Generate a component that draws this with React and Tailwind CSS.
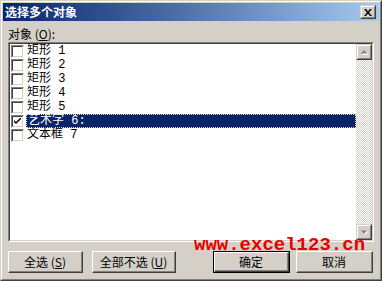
import React from "react";

const items = [
  { label: "矩形 1", checked: false },
  { label: "矩形 2", checked: false },
  { label: "矩形 3", checked: false },
  { label: "矩形 4", checked: false },
  { label: "矩形 5", checked: false },
  { label: "艺术字 6:", checked: true, selected: true },
  { label: "文本框 7", checked: false },
];

function CheckBox({ checked }) {
  return (
    <div className="w-[13px] h-[13px] border border-t-[#808080] border-l-[#808080] border-r-white border-b-white shrink-0">
      <div className="w-full h-full border border-t-[#404040] border-l-[#404040] border-r-[#d4d0c8] border-b-[#d4d0c8] bg-white flex items-center justify-center">
        {checked && (
          <svg width="7" height="7" viewBox="0 0 7 7">
            <path d="M0 2 L0 4 L2 6 L7 1 L7 -1 L2 4 Z" fill="#000" />
          </svg>
        )}
      </div>
    </div>
  );
}

function Raised({ className = "", children }) {
  return (
    <div className={"border border-t-[#d4d0c8] border-l-[#d4d0c8] border-r-[#404040] border-b-[#404040] " + className}>
      <div className="w-full h-full border border-t-white border-l-white border-r-[#808080] border-b-[#808080] bg-[#d4d0c8] flex items-center justify-center">
        {children}
      </div>
    </div>
  );
}

function Button({ className = "", def = false, children }) {
  if (def) {
    return (
      <div className={"border border-black " + className}>
        <div className="w-full h-full border border-t-white border-l-white border-r-[#404040] border-b-[#404040]">
          <div className="w-full h-full border-r border-b border-r-[#808080] border-b-[#808080] bg-[#d4d0c8] flex items-center justify-center text-[12px] text-black">
            {children}
          </div>
        </div>
      </div>
    );
  }
  return (
    <div className={"border border-t-white border-l-white border-r-[#404040] border-b-[#404040] " + className}>
      <div className="w-full h-full border-r border-b border-r-[#808080] border-b-[#808080] bg-[#d4d0c8] flex items-center justify-center text-[12px] text-black">
        {children}
      </div>
    </div>
  );
}

export default function App() {
  return (
    <div
      className="w-[382px] h-[281px] border border-t-[#d4d0c8] border-l-[#d4d0c8] border-r-[#404040] border-b-[#404040] overflow-hidden"
      style={{ fontFamily: '"Noto Sans CJK SC", "Noto Sans", sans-serif' }}
    >
      <div className="relative h-full border border-t-white border-l-white border-r-[#808080] border-b-[#808080] bg-[#d4d0c8] p-px flex flex-col">
        {/* title bar */}
        <div className="h-[18px] bg-gradient-to-r from-[#0a246a] to-[#a6caf0] flex items-center pl-[2px] pr-[3px]">
          <span className="text-white font-bold text-[12px] leading-[14px] flex-1">选择多个对象</span>
          <Raised className="w-[16px] h-[14px]">
            <svg width="8" height="7" viewBox="0 0 8 7">
              <path d="M0 0h2l2 2.5L6 0h2L5 3.5 8 7H6L4 4.5 2 7H0l3-3.5z" fill="#000" />
            </svg>
          </Raised>
        </div>

        {/* body */}
        <div className="flex-1 px-[5px] flex flex-col">
          <div className="mt-[6px] h-[14px] text-[12px] leading-[14px] text-black">
            对象 (<span className="underline">O</span>):
          </div>
          <div className="mt-px h-[200px] border border-t-[#808080] border-l-[#808080] border-r-white border-b-white">
            <div className="h-full border border-t-[#404040] border-l-[#404040] border-r-[#d4d0c8] border-b-[#d4d0c8] bg-white flex">
              <div className="flex-1 flex flex-col">
                {items.map((it) => (
                  <div key={it.label} className="h-[14px] flex items-center pl-px">
                    <CheckBox checked={it.checked} />
                    <div
                      className={
                        "ml-[2px] flex-1 h-[14px] flex items-center pl-px text-[12px] leading-[12px] " +
                        (it.selected
                          ? "bg-[#0a246a] text-white border border-dotted border-[#e8e0b0]"
                          : "text-black")
                      }
                      style={{ fontFamily: '"Liberation Mono", "Noto Sans CJK SC", monospace' }}
                    >
                      {it.label}
                    </div>
                  </div>
                ))}
              </div>
              {/* scrollbar */}
              <div className="w-[16px] flex flex-col bg-[repeating-conic-gradient(#d4d0c8_0_25%,#ffffff_0_50%)] bg-[length:2px_2px]">
                <Raised className="w-[16px] h-[16px]">
                  <svg width="8" height="5" viewBox="0 0 8 5">
                    <path d="M4 1 L7 4 L1 4 Z" fill="#fff" transform="translate(1 1)" />
                    <path d="M4 0 L7 3.5 L1 3.5 Z" fill="#808080" />
                  </svg>
                </Raised>
                <div className="flex-1" />
                <Raised className="w-[16px] h-[16px]">
                  <svg width="8" height="5" viewBox="0 0 8 5">
                    <path d="M1 1 L7 1 L4 4.5 Z" fill="#fff" transform="translate(1 0.5)" />
                    <path d="M1 0.5 L7 0.5 L4 4 Z" fill="#808080" />
                  </svg>
                </Raised>
              </div>
            </div>
          </div>

          {/* buttons */}
          <div className="mt-[9px] flex h-[22px]">
            <Button className="w-[75px] h-[22px]">
              全选 (<span className="underline">S</span>)
            </Button>
            <Button className="ml-[9px] w-[84px] h-[22px]">
              全部不选 (<span className="underline">U</span>)
            </Button>
            <Button def className="ml-[37px] w-[77px] h-[22px]">
              确定
            </Button>
            <Button className="ml-[6px] w-[77px] h-[22px]">
              取消
            </Button>
          </div>
        </div>

        {/* watermark */}
        <div
          className="absolute left-[192px] top-[236px] text-[19px] leading-[15px] font-bold text-[#e60000] whitespace-nowrap"
          style={{ fontFamily: '"Liberation Mono", monospace' }}
        >
          www.excel123.cn
        </div>
      </div>
    </div>
  );
}
